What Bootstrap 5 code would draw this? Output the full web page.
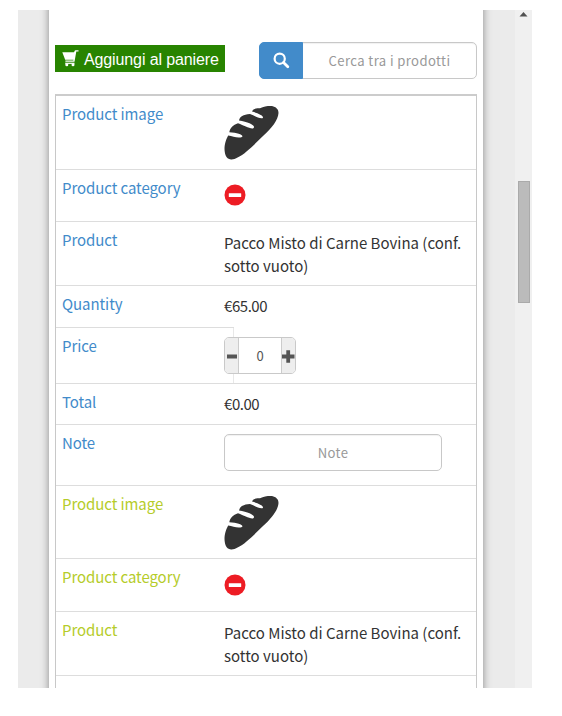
<!DOCTYPE html>
<html lang="it">
<head>
<meta charset="utf-8">
<meta name="viewport" content="width=device-width, initial-scale=1">
<title>Prodotti</title>
<link href="https://cdn.jsdelivr.net/npm/bootstrap@5.3.0/dist/css/bootstrap.min.css" rel="stylesheet">
<style>
body{font-family:"Noto Sans CJK SC",sans-serif;font-size:15px;line-height:23px;color:#333;background:#fff}
.viewport{width:514px;height:678px;margin:10px 0 0 18px;background:#ebebeb}
.sheet{width:434px;margin-left:31px;padding:51px 6px 0;box-shadow:0 0 8px rgba(0,0,0,.42);height:720px;margin-top:-20px}
.sheet-wrap{width:497px}
.toolbar{height:37px;margin-bottom:16px}
.btn-basket{width:170px;height:27px;margin-top:4px;background:#288400;color:#fff;font:16px/27px "Liberation Sans",sans-serif;letter-spacing:-.12px;padding-left:7px}
.btn-basket svg{margin:4px 5px 0 0}
.search{width:218px;height:37px;margin-top:1px}
.search .btn{width:44px;padding:0;background:#428bca;border-color:#428bca;border-radius:5px 0 0 5px}
.form-control,.form-control:focus{font-size:13.1px;letter-spacing:.4px;border-color:#c8c8c8;text-align:center;padding:0;border-radius:5px;color:#555;box-shadow:inset 0 1px 1px rgba(0,0,0,.06)}
.form-control::placeholder{color:#999}
.grid{border:1px solid #c8c8c8;border-top:2px solid #ccc;height:640px}
.line{border-bottom:1px solid #ddd}
.term{width:168px;padding:6px 0 0 6px;color:#428bca;flex:none;letter-spacing:-.08px}
.second .term{color:#b5cc2a}
.val{padding-top:9px;flex:1}
.amount{padding-top:8px;letter-spacing:-.45px}
.badge-cell{padding-top:14px}
.second .badge-cell{padding-top:15px}
.h-img{height:74px}.second .h-img{height:73px}
.h-cat{height:52px}.second .h-cat{height:53px}
.h-name{height:64px}.h-qty{height:42px}.h-price{height:56px}.h-total{height:41px}.h-note{height:61px}
.h-price .term{position:relative}
.edge{position:absolute;right:-10px;top:0;bottom:0;width:1px;background:#e8e8e8}
.h-qty{border-bottom:0;background:linear-gradient(#ddd,#ddd) left bottom/178px 1px no-repeat}
.stepper{width:72px;height:37px;position:relative;border:1px solid #c9c9c9;border-radius:5px;background:#fff;overflow:hidden}
.stepper button{width:14px;border:0;padding:0;background:#eee;flex:none}
.stepper .dec{border-right:1px solid #ccc}
.stepper .inc{border-left:1px solid #ccc}
.stepper span{flex:1;text-align:center;font-size:13px;color:#555}
.note-field{width:218px;height:37px}
.track{width:17px;background:#f0f0f0}
.thumb{width:12px;height:122px;margin-left:3px;background:#bbb;border:1px solid #aaa}
.arrow-up{height:171px}
svg{display:block}
</style>
</head>
<body>
<svg width="0" height="0" class="position-absolute" aria-hidden="true">
<symbol id="bread" viewBox="0 0 56 56"><path fill="#333" d="M7 54.5C1.500 54 .5 48 .5 43C1 37 2.500 34 4.200 30.600C9 31.500 14 33.500 18 32C20 30 14 27.600 5.300 27.200C6 23 9 20 14 18.300C20 20.500 25 23.800 29 23.400C33 21 25 17 15 15.500C16 11.500 19 9.500 26 9C31 11 35 13.800 38.500 13.200C41 11 34 8.200 28 6.600C29 3.600 32 3 36 3.200C40 1.300 44 .8 48 1C52 2 54.500 4 54.500 8C54 15 48 23 39 31C31 39 21 49 14 52.300C11 54 9 54.700 7 54.500Z"/></symbol>
<symbol id="stop" viewBox="0 0 22 22"><circle cx="11" cy="11" r="10.500" fill="#ed1c24"/><rect x="4.800" y="9.200" width="12.400" height="3.800" rx=".6" fill="#fff"/></symbol>
</svg>
<div class="viewport d-flex overflow-hidden">
<div class="sheet-wrap overflow-hidden">
<main class="sheet bg-white">
<div class="toolbar d-flex justify-content-between align-items-start">
<button class="btn-basket border-0 d-flex text-nowrap"><svg width="17" height="17" viewBox="0 0 17 17"><path fill="#fff" d="M.3 2.300H12L12.900.6Q13.100.2 13.600.2H16.500V1.600H14.300L12.500 11.700H3.400V10.500H11.300L11.500 9.700H3.200Z"/><path fill="none" stroke="#fff" stroke-width="1.200" d="M3.200 13.300H12.500"/><circle cx="4.800" cy="14.700" r="1.500" fill="#fff"/><circle cx="11" cy="14.700" r="1.500" fill="#fff"/></svg><span>Aggiungi al paniere</span></button>
<div class="search input-group flex-nowrap">
<button class="btn btn-primary d-flex align-items-center justify-content-center" aria-label="Cerca"><svg width="17" height="17" viewBox="0 0 17 17" fill="none" stroke="#fff"><circle cx="6.700" cy="6.700" r="5.100" stroke-width="2.200"/><path d="M10.500 10.500L14.800 14.800" stroke-width="2.800" stroke-linecap="round"/></svg></button>
<input class="form-control" placeholder="Cerca tra i prodotti">
</div>
</div>
<div class="grid">
<section>
<div class="line d-flex h-img"><div class="term">Product image</div><div class="val"><svg width="56" height="56"><use href="#bread"/></svg></div></div>
<div class="line d-flex h-cat"><div class="term">Product category</div><div class="val badge-cell"><svg width="22" height="22"><use href="#stop"/></svg></div></div>
<div class="line d-flex h-name"><div class="term">Product</div><div class="val">Pacco Misto di Carne Bovina (conf. sotto vuoto)</div></div>
<div class="line d-flex h-qty"><div class="term">Quantity</div><div class="val amount">€65.00</div></div>
<div class="line d-flex h-price"><div class="term">Price<i class="edge"></i></div><div class="val"><div class="stepper d-flex align-items-stretch"><button class="dec" aria-label="Meno"><svg width="13" height="35" viewBox="0 0 13 35"><path d="M2 18.500H12" stroke="#555" stroke-width="4"/></svg></button><span class="align-self-center">0</span><button class="inc" aria-label="Più"><svg width="13" height="35" viewBox="0 0 13 35"><path d="M0 18.500H12.500M6.200 12.300V24.700" stroke="#555" stroke-width="3.800"/></svg></button></div></div></div>
<div class="line d-flex h-total"><div class="term">Total</div><div class="val amount">€0.00</div></div>
<div class="line d-flex h-note"><div class="term">Note</div><div class="val"><input class="form-control note-field" placeholder="Note"></div></div>
</section>
<section class="second">
<div class="line d-flex h-img"><div class="term">Product image</div><div class="val"><svg width="56" height="56"><use href="#bread"/></svg></div></div>
<div class="line d-flex h-cat"><div class="term">Product category</div><div class="val badge-cell"><svg width="22" height="22"><use href="#stop"/></svg></div></div>
<div class="line d-flex h-name"><div class="term">Product</div><div class="val">Pacco Misto di Carne Bovina (conf. sotto vuoto)</div></div>
</section>
</div>
</main>
</div>
<div class="track"><div class="arrow-up"><svg width="17" height="10" viewBox="0 0 17 10"><path d="M4.500 6.500L8.500 2L12.500 6.500Z" fill="#505050"/></svg></div><div class="thumb"></div></div>
</div>
</body>
</html>
